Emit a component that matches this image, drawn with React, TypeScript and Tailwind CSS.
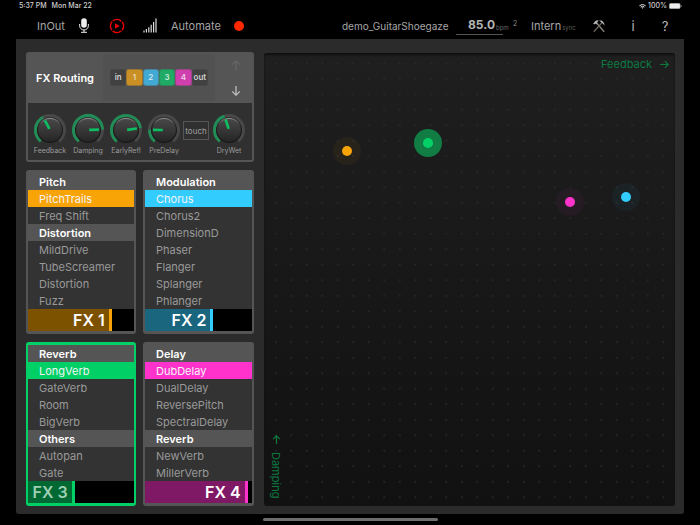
import React, { useState } from "react";

type Effect = { name: string; heading?: boolean };
type Slot = {
  id: number;
  level: number;
  items: Effect[];
  selected: string;
  frame: string;
  active: string;
  fill: string;
  label: string;
};

const h = (name: string): Effect => ({ name, heading: true });
const e = (name: string): Effect => ({ name });

const SLOTS: Slot[] = [
  {
    id: 1,
    level: 79,
    selected: "PitchTrails",
    items: [h("Pitch"), e("PitchTrails"), e("Freq Shift"), h("Distortion"), e("MildDrive"), e("TubeScreamer"), e("Distortion"), e("Fuzz")],
    frame: "border-[#555555]",
    active: "bg-[#f8a306]",
    fill: "bg-[#7c5100] border-[#f8a306]",
    label: "text-white",
  },
  {
    id: 2,
    level: 64,
    selected: "Chorus",
    items: [h("Modulation"), e("Chorus"), e("Chorus2"), e("DimensionD"), e("Phaser"), e("Flanger"), e("Splanger"), e("Phlanger")],
    frame: "border-[#555555]",
    active: "bg-[#33ccff]",
    fill: "bg-[#1a667f] border-[#33ccff]",
    label: "text-white",
  },
  {
    id: 3,
    level: 44,
    selected: "LongVerb",
    items: [h("Reverb"), e("LongVerb"), e("GateVerb"), e("Room"), e("BigVerb"), h("Others"), e("Autopan"), e("Gate")],
    frame: "border-[#00d066]",
    active: "bg-[#00d066]",
    fill: "bg-[#006833] border-[#00d066]",
    label: "text-[#9fd0b3]",
  },
  {
    id: 4,
    level: 96,
    selected: "DubDelay",
    items: [h("Delay"), e("DubDelay"), e("DualDelay"), e("ReversePitch"), e("SpectralDelay"), h("Reverb"), e("NewVerb"), e("MillerVerb")],
    frame: "border-[#555555]",
    active: "bg-[#ff33cc]",
    fill: "bg-[#7f1966] border-[#ff33cc]",
    label: "text-white",
  },
];

const CHIPS = [
  { name: "in", color: "bg-[#414141] text-[#d0d0d0]" },
  { name: "1", color: "bg-[#cb9023] text-[#e6d9bd]" },
  { name: "2", color: "bg-[#42a9d2] text-[#d3e6ee]" },
  { name: "3", color: "bg-[#1fab65] text-[#c9e6d6]" },
  { name: "4", color: "bg-[#d03fae] text-[#efd2e7]" },
  { name: "out", color: "bg-[#414141] text-[#d0d0d0]" },
];

const PINS = [
  { name: "FX 1", x: 83, y: 98, dot: "bg-[#f8a306]", halo: "bg-[#f8a306]/5" },
  { name: "FX 3", x: 164, y: 90, dot: "bg-[#00d066]", halo: "bg-[#117d44]" },
  { name: "FX 4", x: 306, y: 149, dot: "bg-[#ff33cc]", halo: "bg-[#ff33cc]/5" },
  { name: "FX 2", x: 362, y: 144, dot: "bg-[#33ccff]", halo: "bg-[#33ccff]/5" },
];

function polar(deg: number, r: number) {
  const a = (deg * Math.PI) / 180;
  return `${(18 + r * Math.sin(a)).toFixed(2)} ${(18 - r * Math.cos(a)).toFixed(2)}`;
}

function arc(from: number, to: number) {
  return `M${polar(from, 14.5)} A14.5 14.5 0 ${to - from > 180 ? 1 : 0} 1 ${polar(to, 14.5)}`;
}

function Knob({ name, start }: { name: string; start: number }) {
  const [angle, setAngle] = useState(start);
  return (
    <label className="relative flex w-[38px] flex-col items-center text-[7px] leading-[6px] text-[#9c9c9c]">
      <svg viewBox="0 0 36 36" className="size-9" aria-hidden="true">
        <defs>
          <linearGradient id="knobFace" x1="0" y1="0" x2="0" y2="1">
            <stop offset="0" stopColor="#484848" />
            <stop offset="1" stopColor="#252525" />
          </linearGradient>
          <linearGradient id="knobRim" x1="0" y1="0" x2="0" y2="1">
            <stop offset="0" stopColor="#8a8a8a" />
            <stop offset="0.3" stopColor="#3a3a3a" />
            <stop offset="1" stopColor="#151515" />
          </linearGradient>
        </defs>
        <path d={arc(-141, 141)} fill="none" stroke="#484848" strokeWidth="3" />
        <path d={arc(-141, angle)} fill="none" stroke="#1f8d55" strokeWidth="3" />
        <circle cx="18" cy="18.3" r="12.8" fill="#171717" />
        <circle cx="18" cy="18" r="12.2" fill="url(#knobRim)" />
        <circle cx="18" cy="18.4" r="11.4" fill="url(#knobFace)" />
        <path d={`M${polar(angle, 1.2)} L${polar(angle, 11)}`} stroke="#0fbd62" strokeWidth="2.7" />
      </svg>
      {name}
      <input
        type="range"
        min={-141}
        max={141}
        value={angle}
        onChange={(ev) => setAngle(Number(ev.target.value))}
        className="absolute inset-0 m-0 size-full cursor-pointer opacity-0"
      />
    </label>
  );
}

function FxCard({ slot }: { slot: Slot }) {
  const [selected, setSelected] = useState(slot.selected);
  const [level, setLevel] = useState(slot.level);
  return (
    <section className={`flex flex-col overflow-hidden rounded-[3px] border-x-2 border-y-3 bg-[#333333] ${slot.frame}`}>
      {slot.items.map((item) =>
        item.heading ? (
          <h3 key={item.name} className="h-[17px] bg-[#555555] pl-[11px] text-[11px] leading-[18px] font-semibold text-white">
            {item.name}
          </h3>
        ) : (
          <button
            key={item.name}
            type="button"
            onClick={() => setSelected(item.name)}
            className={`h-[17px] pl-[11px] text-left text-[11px] leading-[18px] ${
              item.name === selected ? `${slot.active} text-[#f4f4f4]` : "text-[#999999]"
            }`}
          >
            {item.name}
          </button>
        )
      )}
      <label className="relative block h-[22px] bg-black">
        <span
          className={`flex h-full items-center justify-end border-r-3 pr-1 text-[16px] leading-[22px] font-semibold ${slot.fill} ${slot.label}`}
          style={{ width: `${level}%` }}
        >
          FX {slot.id}
        </span>
        <input
          type="range"
          min={0}
          max={100}
          value={level}
          onChange={(ev) => setLevel(Number(ev.target.value))}
          className="absolute inset-0 m-0 size-full cursor-pointer opacity-0"
        />
      </label>
    </section>
  );
}

function StatusBar() {
  return (
    <div className="flex h-3 items-center justify-between pr-[18px] pl-[19px] text-[7px] leading-3 font-medium text-[#cfcfcf]">
      <div className="flex gap-[5px]">
        <span>5:37 PM</span>
        <span>Mon Mar 22</span>
      </div>
      <div className="flex items-center gap-[2px]">
        <svg viewBox="0 0 14 10" className="h-[5px] w-[7px]" fill="none" stroke="#e5e5e5" strokeWidth="2" aria-hidden="true">
          <path d="M.8 3.6a9 9 0 0 1 12.4 0M3.3 6.2a5.4 5.4 0 0 1 7.4 0" />
          <path d="M5.2 7.6 7 9.6l1.8-2a2.6 2.6 0 0 0-3.6 0z" fill="#e5e5e5" stroke="none" />
        </svg>
        <span>100%</span>
        <svg viewBox="0 0 13 6" className="h-[6px] w-[13px]" aria-hidden="true">
          <rect x=".25" y=".25" width="11" height="5.5" rx="1.6" fill="#eee" stroke="#888" strokeWidth=".5" />
          <path d="M12 2v2q.8-.3.8-1T12 2z" fill="#999" />
        </svg>
      </div>
    </div>
  );
}

function Toolbar() {
  return (
    <header className="flex h-[27px] items-center justify-between pr-[26px] pl-[37px] text-[11px] leading-4 text-[#a6a6a6]">
      <div className="flex items-center">
        <button type="button" className="w-[42px] text-left">InOut</button>
        <button type="button" aria-label="Microphone" className="w-[30px]">
          <svg viewBox="0 0 10 15" className="h-[15px] w-[10px]" aria-hidden="true">
            <rect x="2.2" y=".2" width="5.6" height="9.6" rx="2.8" fill="#eee" />
            <path d="M.6 6v1.6a4.4 4.4 0 0 0 8.8 0V6M5 12v2M2 14.3h6" fill="none" stroke="#eee" strokeWidth="1" />
          </svg>
        </button>
        <button type="button" aria-label="Play" className="w-[34px]">
          <svg viewBox="0 0 16 16" className="size-4" aria-hidden="true">
            <circle cx="8" cy="8" r="6.6" fill="none" stroke="#ee0000" strokeWidth="1.4" strokeDasharray="9.4 .97" strokeDashoffset="4.7" />
            <path d="M6 5.2v5.6L10.8 8z" fill="#ee0000" />
          </svg>
        </button>
        <button type="button" aria-label="Level" className="w-7">
          <svg viewBox="0 0 14 15" className="h-[15px] w-[14px]" stroke="#dddddd" strokeWidth="1.2" aria-hidden="true">
            <path d="M1 14.4v-1.9M3.4 14.4v-3.4M5.8 14.4V9.2M8.2 14.4V6.8M10.6 14.4V4M13 14.4V.5" />
          </svg>
        </button>
        <button type="button" className="w-[63px] text-left">Automate</button>
        <button type="button" aria-label="Record" className="size-[10px] rounded-full bg-[#ff2800]" />
      </div>
      <div className="flex items-center">
        <button type="button" className="w-[114px] text-left text-[10px]">demo_GuitarShoegaze</button>
        <button type="button" className="mt-[2px] flex h-[17px] w-[47px] items-start justify-end border-b border-[#555555] pr-2">
          <span className="text-[12px] leading-[14px] font-bold text-[#b5b5b5]">85.0</span>
        </button>
        <span className="-ml-[7px] w-[17px] pt-1 text-[6px] leading-3 text-[#6a6a6a]">bpm</span>
        <sup className="top-0 w-[18px] pb-1 text-[7px] leading-3 text-[#888888]">2</sup>
        <button type="button" className="flex w-[61px] items-baseline gap-px text-left">
          Intern<span className="text-[6px] leading-3 text-[#5c5c5c]">sync</span>
        </button>
        <button type="button" aria-label="Tools" className="w-[32px] text-left">
          <svg viewBox="0 0 14 14" className="size-[14px]" fill="none" aria-hidden="true">
            <path d="M4.4 3.8 12.2 12.8" stroke="#8a8580" strokeWidth="1.3" />
            <path d="M10 3.6 1.8 12.8" stroke="#6e665f" strokeWidth="1.3" />
            <path d="M1.2 4.6 3.4 2q1.6-1.2 3.4-.6L5 3.2l.6.8-1.4 1.4-.9-.8-1 .9z" fill="#b4b4b4" />
            <path d="M7.2 1.6q2.4-.4 3.8 1.1t1.6 4L11.3 5 9 2.9z" fill="#cccccc" />
          </svg>
        </button>
        <button type="button" className="w-[18px] text-[13px] text-[#b8b8b8]">i</button>
        <button type="button" className="ml-[14px] w-[18px] text-[13px] text-[#b8b8b8]">?</button>
      </div>
    </header>
  );
}

function Arrow({ className }: { className: string }) {
  return (
    <svg viewBox="0 0 10 10" className={className} fill="none" stroke="currentColor" strokeWidth="1.3" aria-hidden="true">
      <path d="M5 0v9M1.2 5.4 5 9.2l3.8-3.8" />
    </svg>
  );
}

function Routing() {
  return (
    <section className="rounded-[3px] bg-[#555555] px-[2px] pb-[2px]">
      <div className="flex h-[51px] items-center">
        <h2 className="w-[75px] pl-2 text-[11px] leading-4 font-semibold whitespace-nowrap text-white">FX Routing</h2>
        <div className="flex h-[47px] w-28 items-center justify-center rounded-[3px] bg-[#515151]">
          <div className="grid w-[98px] grid-cols-6">
            {CHIPS.map((c) => (
              <button
                key={c.name}
                type="button"
                className={`h-[17px] rounded-[3px] border border-[#4d4d4d]/40 text-[8px] leading-[15px] font-semibold ${c.color}`}
              >
                {c.name}
              </button>
            ))}
          </div>
        </div>
        <div className="flex flex-1 flex-col items-center gap-4 pl-1">
          <button type="button" aria-label="Move up" className="text-[#666666]">
            <Arrow className="size-[10px] rotate-180" />
          </button>
          <button type="button" aria-label="Move down" className="text-[#bdbdbd]">
            <Arrow className="size-[10px]" />
          </button>
        </div>
      </div>
      <div className="flex h-[57px] bg-[#303030] pt-[9px] pl-[3px]">
        <Knob name="Feedback" start={-28} />
        <Knob name="Damping" start={88} />
        <Knob name="EarlyRefl" start={82} />
        <Knob name="PreDelay" start={-89} />
        <button type="button" className="mt-[9px] mr-px h-[19px] w-[26px] border border-[#555555] text-[8px] leading-4 text-[#a0a0a0]">
          touch
        </button>
        <Knob name="DryWet" start={-18} />
      </div>
    </section>
  );
}

function XYPad() {
  return (
    <section className="relative mt-px flex flex-1 flex-col justify-between overflow-hidden rounded-[3px] bg-linear-to-b from-[#1f1f1f] to-[#111111] text-[11px] leading-4 text-[#0c7a41] shadow-[inset_0_2px_2px_#101010]">
      <svg className="absolute inset-0 size-full" aria-hidden="true">
        <defs>
          <pattern id="padDots" x="4" y="2.5" width="15.5" height="15.5" patternUnits="userSpaceOnUse">
            <circle cx="7.75" cy="7.75" r=".9" fill="#2a2a2a" />
          </pattern>
        </defs>
        <rect width="100%" height="100%" fill="url(#padDots)" />
      </svg>
      <div className="relative flex items-center justify-end gap-2 pt-[3px] pr-[6px]">
        <span>Feedback</span>
        <Arrow className="size-[9px] -rotate-90" />
      </div>
      <div className="relative ml-1 flex w-4 flex-col items-center gap-2 pb-2">
        <Arrow className="size-[9px] rotate-180" />
        <span className="[writing-mode:vertical-rl]">Damping</span>
      </div>
      {PINS.map((p) => (
        <button
          key={p.name}
          type="button"
          aria-label={p.name}
          className={`absolute flex size-7 -translate-1/2 items-center justify-center rounded-full ${p.halo}`}
          style={{ left: `${(p.x / 411) * 100}%`, top: `${(p.y / 453) * 100}%` }}
        >
          <span className={`size-[10px] rounded-full ${p.dot}`} />
        </button>
      ))}
    </section>
  );
}

export default function App() {
  return (
    <div className="flex min-h-screen flex-col bg-black font-['Inter','Liberation_Sans',sans-serif]">
      <StatusBar />
      <Toolbar />
      <main className="mx-4 flex flex-1 gap-[10px] rounded-b-[3px] bg-[#2b2b2b] pt-[13px] pr-[9px] pb-2 pl-[10px]">
        <div className="flex w-[228px] flex-col gap-2">
          <Routing />
          <div className="grid grid-cols-[110px_1fr] gap-x-[7px] gap-y-2">
            {SLOTS.map((s) => (
              <FxCard key={s.id} slot={s} />
            ))}
          </div>
        </div>
        <XYPad />
      </main>
      <footer className="flex h-[11px] items-center justify-center">
        <div className="h-[3px] w-1/4 rounded-full bg-[#6e6e6e]" />
      </footer>
    </div>
  );
}
